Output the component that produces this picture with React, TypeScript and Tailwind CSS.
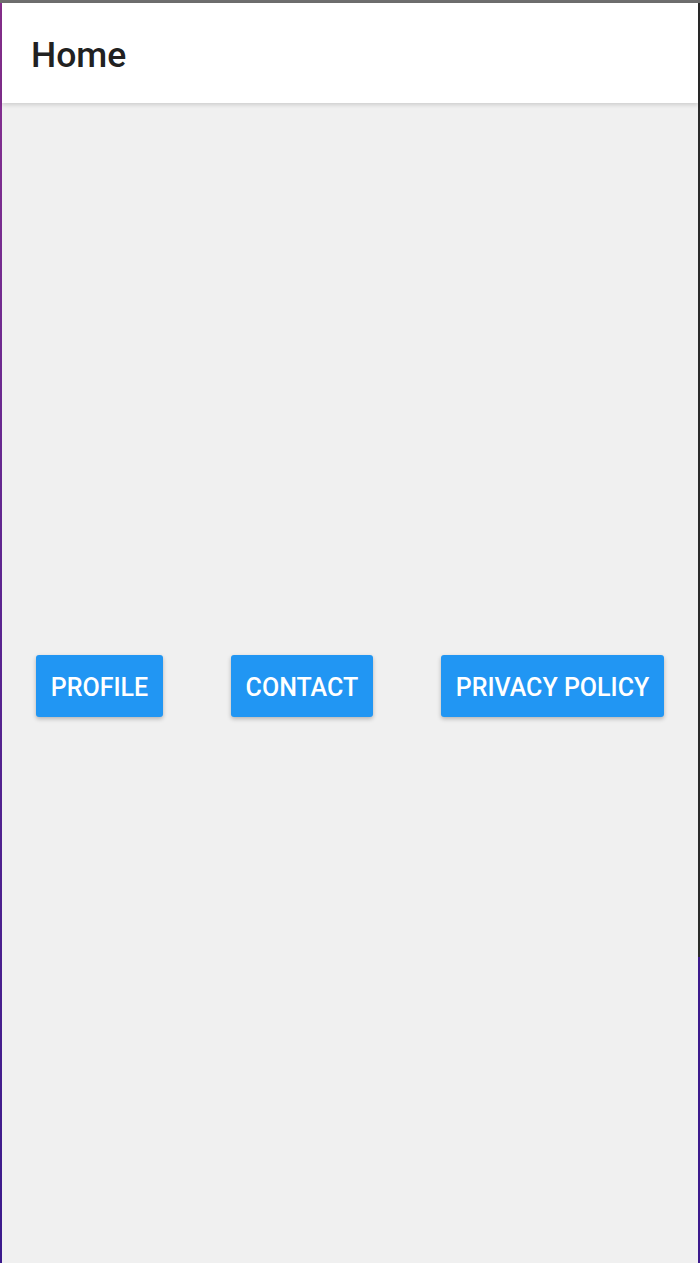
import React from 'react';

export default function App() {
  const buttons = ['PROFILE', 'CONTACT', 'PRIVACY POLICY'];

  return (
    <div className="relative flex h-[1263px] w-[700px] flex-col bg-[#f0f0f0]" style={{ fontFamily: 'Roboto, "Noto Sans", sans-serif' }}>
      <div className="h-[3px] w-full bg-[#6e6e6e]"></div>
      <div className="flex flex-1">
        <div className="w-[2px] bg-gradient-to-b from-[#8a2f8f] via-[#5a2490] to-[#3b1a8c]"></div>
        <div className="flex flex-1 flex-col">
          <header className="z-10 flex h-[100px] items-center bg-white pl-[29px] pt-[5px] shadow-[0_2px_4px_rgba(0,0,0,0.14)]">
            <h1 className="text-[35.5px] font-medium text-[#212121]">Home</h1>
          </header>
          <main className="flex flex-1 items-center justify-around pt-[6px]">
            {buttons.map((label) => (
              <button
                key={label}
                className="h-[62px] rounded-[3px] bg-[#2196f3] px-[15px] pt-[3px] text-[25px] font-medium text-white shadow-[0_2px_4px_rgba(0,0,0,0.25)]"
              >
                {label}
              </button>
            ))}
          </main>
        </div>
        <div className="flex w-[2px] flex-col">
          <div className="h-[954px] bg-[#2a2a2a]"></div>
          <div className="flex-1 bg-[#3b1a8c]"></div>
        </div>
      </div>
    </div>
  );
}
